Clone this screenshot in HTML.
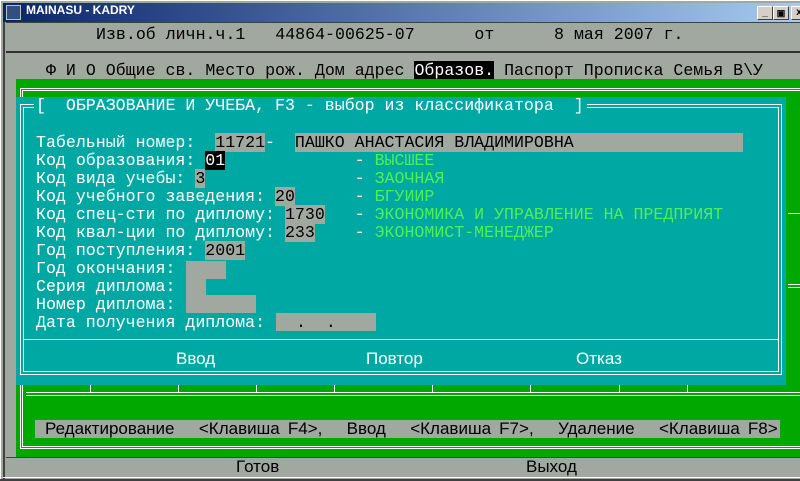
<!DOCTYPE html>
<html><head><meta charset="utf-8"><style>
*{margin:0;padding:0;box-sizing:border-box}
body{width:800px;height:481px;overflow:hidden;background:#a0a8a0;position:relative;font-family:"Liberation Mono","DejaVu Sans Mono",monospace;}
.a{position:absolute}
.t{position:absolute;font-size:16.6px;line-height:18px;white-space:pre;letter-spacing:0}
.w{color:#fff}.k{color:#000}.g{color:#50f050}
.in{background:#a0a8a0;color:#000}
.cond{font-family:"Liberation Sans Narrow","Liberation Sans",sans-serif;font-size:17px;line-height:18px;position:absolute;white-space:pre}
</style></head><body>
<div class="a" style="left:0;top:0;width:800px;height:481px;border:1px solid #fff;border-right:none;border-bottom:1px solid #404040"></div>
<div class="a" style="left:3px;top:3px;width:797px;height:19px;background:linear-gradient(90deg,#0a246a,#a6caf0)"></div>
<div class="a" style="left:6px;top:5px;width:15px;height:15px;background:#305080;border:1px solid #c0c0c0"></div>
<div class="a" style="left:26px;top:3px;height:19px;line-height:19px;color:#fff;font:bold 12px 'Liberation Sans',sans-serif">MAINASU - KADRY</div>
<div class="a" style="left:757px;top:6px;width:16px;height:14px;background:#d4d0c8;border:1px solid;border-color:#fff #404040 #404040 #fff;font:bold 10px 'Liberation Sans';text-align:center;line-height:12px">_</div>
<div class="a" style="left:773px;top:6px;width:16px;height:14px;background:#d4d0c8;border:1px solid;border-color:#fff #404040 #404040 #fff;font:bold 9px 'Liberation Sans';text-align:center;line-height:12px">&#x25A3;</div>
<div class="a" style="left:791px;top:6px;width:16px;height:14px;background:#d4d0c8;border:1px solid;border-color:#fff #404040 #404040 #fff;font:bold 10px 'Liberation Sans';text-align:center;line-height:12px">x</div>
<div class="a" style="left:3px;top:22px;width:2px;height:457px;background:#404040"></div>
<div class="a" style="left:6px;top:22px;width:794px;height:1px;background:#404040"></div>
<div class="a" style="left:6px;top:51px;width:794px;height:2px;background:#303030"></div>
<div class="t k" style="left:96px;top:26px">Изв.об личн.ч.1   44864-00625-07      от      8 мая 2007 г.</div>
<div class="t k" style="left:46px;top:62px">Ф И О Общие св. Место рож. Дом адрес <span style="background:#000;color:#fff">Образов.</span> Паспорт Прописка Семья В\У</div>
<div class="a" style="left:16px;top:79px;width:784px;height:378px;background:#00a800"></div>
<div class="a" style="left:20px;top:88px;width:780px;height:361px;border-top:1px solid #fff;border-left:1px solid #fff;border-bottom:1px solid #fff"></div>
<div class="a" style="left:22px;top:90px;width:778px;height:357px;border-top:1px solid #fff;border-left:1px solid #fff;border-bottom:1px solid #fff"></div>
<div class="a" style="left:26px;top:392px;width:774px;height:1px;background:#fff"></div>
<div class="a" style="left:26px;top:395px;width:774px;height:1px;background:#fff"></div>
<div class="a" style="left:90px;top:385px;width:1px;height:8px;background:#fff"></div>
<div class="a" style="left:178px;top:385px;width:1px;height:8px;background:#fff"></div>
<div class="a" style="left:256px;top:385px;width:1px;height:8px;background:#fff"></div>
<div class="a" style="left:334px;top:385px;width:1px;height:8px;background:#fff"></div>
<div class="a" style="left:432px;top:385px;width:1px;height:8px;background:#fff"></div>
<div class="a" style="left:530px;top:385px;width:1px;height:8px;background:#fff"></div>
<div class="a" style="left:619px;top:385px;width:1px;height:8px;background:#fff"></div>
<div class="a" style="left:687px;top:385px;width:1px;height:8px;background:#fff"></div>
<div class="a" style="left:788px;top:213px;width:12px;height:1px;background:#fff"></div>
<div class="a" style="left:788px;top:284px;width:12px;height:1px;background:#fff"></div>
<div class="a" style="left:788px;top:287px;width:12px;height:1px;background:#fff"></div>
<div class="a" style="left:35px;top:420px;width:745px;height:18px;background:#a0a8a0"></div>
<div class="cond" style="left:45px;top:420px;word-spacing:3.4px">Редактирование   &lt;Клавиша F4&gt;,   Ввод   &lt;Клавиша F7&gt;,   Удаление   &lt;Клавиша F8&gt;</div>
<div class="a" style="left:16px;top:97px;width:770px;height:288px;background:#00a8a4"></div>
<div class="a" style="left:20px;top:104px;width:762px;height:271px;border:1px solid #fff"></div>
<div class="a" style="left:23px;top:107px;width:756px;height:265px;border:1px solid #fff"></div>
<div class="a" style="left:23px;top:339px;width:756px;height:1px;background:#fff"></div>
<div class="a" style="left:34px;top:97px;width:553px;height:18px;background:#00a8a4"></div>
<div class="t w" style="left:36px;top:97px">[  ОБРАЗОВАНИЕ И УЧЕБА, F3 - выбор из классификатора  ]</div>
<div class="t w" style="left:36px;top:134px">Табельный номер:  <span class="in">11721</span>-  <span class="in">ПАШКО АНАСТАСИЯ ВЛАДИМИРОВНА                 </span></div>
<div class="t w" style="left:36px;top:152px">Код образования: <span style="background:#000;color:#fff">01</span>             - <span class="g">ВЫСШЕЕ</span></div>
<div class="t w" style="left:36px;top:170px">Код вида учебы: <span class="in">3</span>               - <span class="g">ЗАОЧНАЯ</span></div>
<div class="t w" style="left:36px;top:188px">Код учебного заведения: <span class="in">20</span>      - <span class="g">БГУИИР</span></div>
<div class="t w" style="left:36px;top:206px">Код спец-сти по диплому: <span class="in">1730</span>   - <span class="g">ЭКОНОМИКА И УПРАВЛЕНИЕ НА ПРЕДПРИЯТ</span></div>
<div class="t w" style="left:36px;top:224px">Код квал-ции по диплому: <span class="in">233</span>    - <span class="g">ЭКОНОМИСТ-МЕНЕДЖЕР</span></div>
<div class="t w" style="left:36px;top:242px">Год поступления: <span class="in">2001</span></div>
<div class="t w" style="left:36px;top:260px">Год окончания: </div>
<div class="a in" style="left:186px;top:261px;width:40px;height:18px"></div>
<div class="t w" style="left:36px;top:278px">Серия диплома: </div>
<div class="a in" style="left:186px;top:278px;width:20px;height:18px"></div>
<div class="t w" style="left:36px;top:296px">Номер диплома: </div>
<div class="a in" style="left:186px;top:295px;width:70px;height:18px"></div>
<div class="t w" style="left:36px;top:314px">Дата получения диплома: </div>
<div class="a in" style="left:276px;top:313px;width:100px;height:18px"></div>
<div class="t k" style="left:296px;top:314px">.  .</div>
<div class="cond" style="left:176px;top:350px;color:#fff">Ввод</div>
<div class="cond" style="left:366px;top:350px;color:#fff">Повтор</div>
<div class="cond" style="left:576px;top:350px;color:#fff">Отказ</div>
<div class="a" style="left:6px;top:457px;width:794px;height:1px;background:#404040"></div>
<div class="cond" style="left:236px;top:458px;color:#000">Готов</div>
<div class="cond" style="left:526px;top:458px;color:#000">Выход</div>
<div class="a" style="left:3px;top:477px;width:797px;height:1px;background:#fff"></div>
<div class="a" style="left:0;top:479px;width:800px;height:2px;background:#404040"></div>
</body></html>
